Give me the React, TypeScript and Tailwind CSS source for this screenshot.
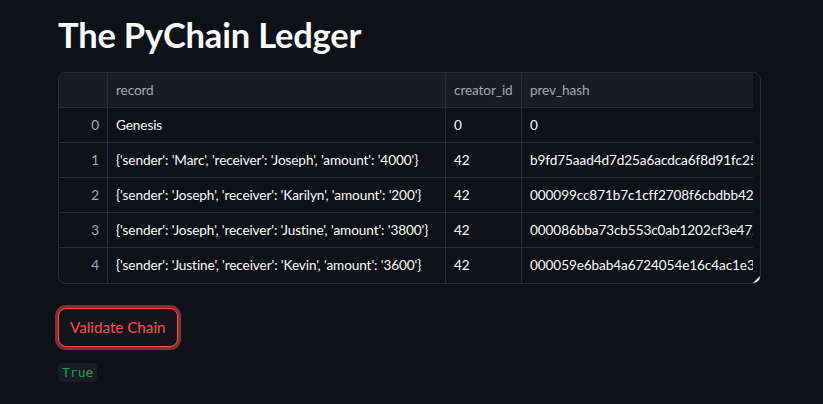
const rows = [
  { i: 0, record: 'Genesis', creator: '0', hash: '0' },
  {
    i: 1,
    record: "{'sender': 'Marc', 'receiver': 'Joseph', 'amount': '4000'}",
    creator: '42',
    hash: 'b9fd75aad4d7d25a6acdca6f8d91fc2568e3a1f0c7b2d4e9',
  },
  {
    i: 2,
    record: "{'sender': 'Joseph', 'receiver': 'Karilyn', 'amount': '200'}",
    creator: '42',
    hash: '000099cc871b7c1cff2708f6cbdbb42122e8f0a9d3c6b1e7',
  },
  {
    i: 3,
    record: "{'sender': 'Joseph', 'receiver': 'Justine', 'amount': '3800'}",
    creator: '42',
    hash: '000086bba73cb553c0ab1202cf3e4720d5f1e2c8a7b3d9f0',
  },
  {
    i: 4,
    record: "{'sender': 'Justine', 'receiver': 'Kevin', 'amount': '3600'}",
    creator: '42',
    hash: '000059e6bab4a6724054e16c4ac1e33b7f2d8c1a9e0b5c4d',
  },
];

function App() {
  return (
    <div className="min-h-screen w-full bg-[#0e1117] px-[58px] pt-[12px] font-['Lato','Noto_Sans',sans-serif] text-[#fafafa]">
      {/* 제목 */}
      <h1 className="text-[34.5px] font-bold leading-[46px] tracking-[-0.2px]">The PyChain Ledger</h1>

      {/* 데이터프레임 */}
      <div className="relative mt-[14px] flex w-[703px] overflow-hidden rounded-lg border border-[#2b2d35]">
        <div className="w-[694px] overflow-hidden">
          <div className="w-[900px] text-[13.6px] tracking-[-0.1px]">
            <div className="flex h-[35px] border-b border-[#2b2d35] bg-[#1a1c24] text-[#a3a8b4]">
              <div className="w-[49px] shrink-0 border-r border-[#2b2d35]" />
              <div className="flex w-[338px] shrink-0 items-center border-r border-[#2b2d35] px-2">record</div>
              <div className="flex w-[76px] shrink-0 items-center border-r border-[#2b2d35] px-2">creator_id</div>
              <div className="flex flex-1 items-center px-2">prev_hash</div>
            </div>
            {rows.map((r, idx) => (
              <div
                key={r.i}
                className={`flex h-[35px] ${idx < rows.length - 1 ? 'border-b border-[#2b2d35]' : ''}`}
              >
                <div className="flex w-[49px] shrink-0 items-center justify-end border-r border-[#2b2d35] px-2 text-[#a3a8b4]">
                  {r.i}
                </div>
                <div className="flex w-[338px] shrink-0 items-center overflow-hidden whitespace-nowrap border-r border-[#2b2d35] px-2">
                  {r.record}
                </div>
                <div className="flex w-[76px] shrink-0 items-center border-r border-[#2b2d35] px-2">{r.creator}</div>
                <div className="flex flex-1 items-center whitespace-nowrap px-2">{r.hash}</div>
              </div>
            ))}
          </div>
        </div>
        <div className="flex-1" />
        {/* 크기 조절 핸들 */}
        <svg className="absolute bottom-0 right-0" width="7" height="7" viewBox="0 0 7 7">
          <path d="M7 0 L7 7 L0 7 Z" fill="#fafafa" />
        </svg>
      </div>

      {/* 버튼 */}
      <button className="mt-[24px] h-[39px] rounded-lg border border-[#ff4b4b] bg-[#12151c] px-[11px] text-[15.2px] text-[#ff4b4b] shadow-[0_0_0_3px_rgba(255,75,75,0.5)]">
        Validate Chain
      </button>

      {/* 결과 */}
      <div className="mt-[16px] leading-none">
        <code className="inline-block rounded bg-[#1a1c24] px-[4px] py-[3px] font-['DejaVu_Sans_Mono',monospace] text-[13px] leading-[13px] text-[#21a04a]">
          True
        </code>
      </div>
    </div>
  );
}

export default App;
